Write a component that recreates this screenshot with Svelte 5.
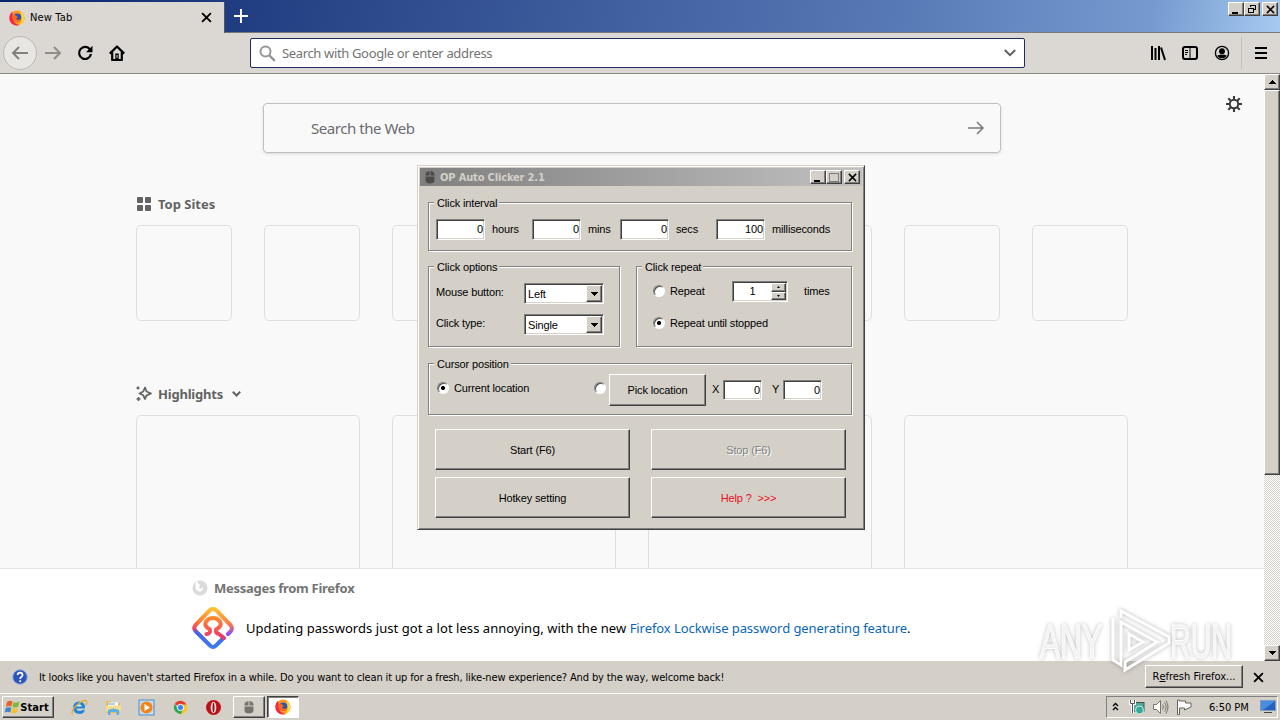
<script>
    const sites = Array(8);
    const highlights = Array(4);

    const intervals = [
        { label: "hours", value: 0 },
        { label: "mins", value: 0 },
        { label: "secs", value: 0 },
        { label: "milliseconds", value: 100 },
    ];

    const options = [
        { label: "Mouse button:", value: "Left" },
        { label: "Click type:", value: "Single" },
    ];
</script>

{#snippet firefox()}
    <svg width="16" height="16" viewBox="0 0 16 16">
        <circle cx="8" cy="8" r="7.6" fill="#ff9a1f" />
        <path d="M3.2 1.8C0 4-.4 9.200 1.600 12.200c2.300 3.200 6.600 4 9.800 2.600C7 15 4 12 4.200 8z" fill="#f5254e" />
        <path d="M11 1.200c4 2 5.600 6.800 3.400 10.600-1.200 2-3 3.200-5 3.600 3.500-3 4.600-6 1.600-14.200z" fill="#ffd83a" />
        <circle cx="8.200" cy="7.400" r="4" fill="#2456b8" />
        <path d="M3.200 4.500c1.600-.4 3 .2 4.200 1.300L9 7.500l-2 .8c1 2 3.500 2 5 .4-.6 3.600-5.600 4.500-7.800 1.600-1-1.600-1.200-3.600-1-5.800z" fill="#ff6a1c" />
    </svg>
{/snippet}

{#snippet mouse(color)}
    <svg width="12" height="16" viewBox="0 0 12 16" fill={color}>
        <path d="M5.500 2v4.500H1.500V5.500q0-3 4-3.500zM6.500 2v4.500h4V5.500q0-3-4-3.500zM1.500 7.500h9V11q0 3.500-4.500 3.500T1.500 11z" />
    </svg>
{/snippet}

{#snippet cross(size)}
    <svg width={size} height={size} viewBox="0 0 10 10">
        <path d="M1 1l8 8M9 1l-8 8" stroke="#000" stroke-width="1.700" fill="none" />
    </svg>
{/snippet}

{#snippet arrow(dir)}
    <svg width="7" height="4" viewBox="0 0 7 4" shape-rendering="crispEdges">
        <path d={dir === "up" ? "M0 4h7L3.500 0z" : "M0 0h7L3.500 4z"} />
    </svg>
{/snippet}

<div class="screen">
    <!-- tabs -->
    <header class="tabstrip">
        <div class="tab">
            {@render firefox()}
            <span class="tab-title">New Tab</span>
            {@render cross(11)}
        </div>
        <svg class="plus" width="14" height="14" viewBox="0 0 14 14">
            <path d="M7 0v14M0 7h14" stroke="#fff" stroke-width="2" />
        </svg>
        <div class="window-buttons">
            <span class="raised winbtn">
                <svg width="10" height="10"><path d="M1 8h6v2H1z" /></svg>
            </span>
            <span class="raised winbtn">
                <svg width="10" height="10" viewBox="0 0 10 10" fill="none" stroke="#000" shape-rendering="crispEdges">
                    <path d="M3.500 3V1.500h5v4H7M3 1h6M1.500 4.500h5v4h-5zM1 4h6" />
                </svg>
            </span>
            <span class="raised winbtn last">{@render cross(9)}</span>
        </div>
    </header>

    <!-- navigation bar -->
    <div class="toolbar">
        <span class="back">
            <svg width="18" height="16" viewBox="0 0 18 16" fill="none" stroke="#82807d" stroke-width="2">
                <path d="M17 8H2M8 2L2 8l6 6" />
            </svg>
        </span>
        <svg class="forward" width="18" height="16" viewBox="0 0 18 16" fill="none" stroke="#908d89" stroke-width="2">
            <path d="M1 8h15M10 2l6 6-6 6" />
        </svg>
        <svg class="reload" width="16" height="16" viewBox="0 0 16 16">
            <path d="M13 4.500A6 6 0 1 0 14 9" fill="none" stroke="#000" stroke-width="2.200" />
            <path d="M15.500 .8v6.400H9z" />
        </svg>
        <svg class="home" width="16" height="16" viewBox="0 0 16 16">
            <path d="M.8 8.600L8 1.500l7.200 7.100M3.200 7.500V15h9.600V7.500" fill="none" stroke="#000" stroke-width="2.200" stroke-linejoin="round" />
            <path d="M6.300 8.500h3.400V15H6.300z" />
            <path d="M7.500 10h1v3h-1z" fill="#dbd8d3" />
        </svg>
        <div class="urlbar">
            <svg width="17" height="17" viewBox="0 0 17 17" fill="none" stroke="#96969a" stroke-width="2">
                <circle cx="6.500" cy="6.500" r="5" />
                <path d="M10.300 10.300l5.500 5.500" stroke-width="2.500" />
            </svg>
            <span class="urltext">Search with Google or enter address</span>
            <svg width="12" height="8" viewBox="0 0 12 8" fill="none" stroke="#606060" stroke-width="2">
                <path d="M.8 1L6 6.200 11.200 1" />
            </svg>
        </div>
        <div class="tools">
            <svg width="16" height="16" viewBox="0 0 16 16" stroke="#000" stroke-width="2" fill="none">
                <path d="M2 1v14M5.500 3v12M9 1v14M11 2.500L15 15" />
            </svg>
            <svg width="16" height="16" viewBox="0 0 16 16" stroke="#000" fill="none">
                <rect x="1" y="2" width="14" height="12" rx="2" stroke-width="2" />
                <path d="M8 2v12M3 5.500h3M3 7.500h3M3 9.500h2" />
            </svg>
            <svg width="16" height="16" viewBox="0 0 16 16">
                <circle cx="8" cy="8" r="6.600" fill="none" stroke="#000" stroke-width="1.300" />
                <circle cx="8" cy="6.200" r="2.900" />
                <path d="M3.300 10.400Q8 8.800 12.700 10.400 11.500 13.200 8 13.200T3.300 10.400z" />
            </svg>
            <i class="separator"></i>
            <svg width="12" height="14" viewBox="0 0 12 14">
                <path d="M0 2h12M0 7h12M0 12h12" stroke="#000" stroke-width="2" />
            </svg>
        </div>
    </div>

    <!-- page -->
    <div class="content">
        <div class="page">
            <main>
                <div class="search">
                    <span>Search the Web</span>
                    <svg width="16" height="14" viewBox="0 0 16 14" fill="none" stroke="#77777b" stroke-width="1.500">
                        <path d="M0 7h15M9 1l6 6-6 6" />
                    </svg>
                </div>
                <h2>
                    <svg width="16" height="16" viewBox="0 0 16 16" fill="#636363">
                        <rect x="1" y="1" width="6" height="6" rx="1" /><rect x="9" y="1" width="6" height="6" rx="1" />
                        <rect x="1" y="9" width="6" height="6" rx="1" /><rect x="9" y="9" width="6" height="6" rx="1" />
                    </svg>
                    <span>Top Sites</span>
                </h2>
                <div class="sites">
                    {#each sites as _}
                        <div class="site"></div>
                    {/each}
                </div>
                <h2 class="second">
                    <svg width="16" height="16" viewBox="0 0 16 16" fill="none" stroke="#636363">
                        <path d="M9 1.500l1.600 4L15 7.500l-4.400 1.800L9 13 7.300 9.300 3.500 7.500l3.800-2z" stroke-width="1.800" stroke-linejoin="round" />
                        <path d="M2 .5v3M.5 2h3M2.500 11v4M.5 13h4" stroke-width="1.600" />
                    </svg>
                    <span class="highlights-title">Highlights</span>
                    <svg class="chevron" width="9" height="6" viewBox="0 0 9 6" fill="none" stroke="#636363" stroke-width="2">
                        <path d="M.8 .8l3.700 3.700L8.200 .8" />
                    </svg>
                </h2>
                <div class="cards">
                    {#each highlights as _}
                        <div class="card"></div>
                    {/each}
                </div>
                <svg class="gear" width="16" height="16" viewBox="0 0 16 16" fill="none" stroke="#3c3c40">
                    <circle cx="8" cy="8" r="4.200" stroke-width="2" />
                    <path d="M8 0v4M8 12v4M0 8h4M12 8h4M2.300 2.300l2.900 2.900M10.800 10.800l2.900 2.900M2.300 13.700l2.900-2.900M10.800 5.200l2.900-2.900" stroke-width="2.100" />
                </svg>
            </main>
            <div class="messages">
                <div class="messages-title">
                    <svg width="16" height="16" viewBox="0 0 16 16">
                        <circle cx="8" cy="8" r="7.500" fill="#dadada" />
                        <path d="M4 .5l4 5-1 2q2 2.500 4-.5Q11 12 7 11.500 3.500 10.500 3.500 6z" fill="#fff" />
                    </svg>
                    <span>Messages from Firefox</span>
                </div>
                <div class="messages-body">
                    <svg width="42" height="42" viewBox="0 0 42 42" fill="none" stroke-width="4" stroke-linecap="round" stroke-linejoin="round">
                        <defs>
                            <linearGradient id="lock" x1="0" y1="0" x2="0" y2="1">
                                <stop offset="0" stop-color="#ffbd30" />
                                <stop offset=".32" stop-color="#ff7d35" />
                                <stop offset=".52" stop-color="#f23e68" />
                                <stop offset=".6" stop-color="#4a60e8" />
                                <stop offset="1" stop-color="#3b7bea" />
                            </linearGradient>
                            <linearGradient id="edge" x1="0" y1="0" x2="0" y2="1">
                                <stop offset="0" stop-color="#ffc030" />
                                <stop offset=".6" stop-color="#ff7a48" />
                                <stop offset="1" stop-color="#8a50f0" />
                            </linearGradient>
                            <linearGradient id="head" x1="0" y1="0" x2="0" y2="1">
                                <stop offset="0" stop-color="#ff8a2b" />
                                <stop offset="1" stop-color="#ee3370" />
                            </linearGradient>
                        </defs>
                        <path d="M21 2q-2 0-3.500 1.500L3.500 18q-2.500 3 0 6L18 38.500q3 3 6 0l7-7" stroke="url(#lock)" />
                        <path d="M21 2q2 0 3.500 1.500L38.500 18q2.500 3 .5 6l-3 3" stroke="url(#edge)" />
                        <path d="M14.500 27q4 0 3.500-4.500Q11.500 19 14 14.500q2.500-3.500 7-3.500t7 3.500Q30.500 19 24 22.500q-.5 4 3 4.500l5 4" stroke="url(#head)" />
                    </svg>
                    <p>Updating passwords just got a lot less annoying, with the new <a href="#lockwise">Firefox Lockwise password generating feature</a>.</p>
                </div>
            </div>
        </div>
        <div class="scrollbar">
            <span class="raised scrollbtn">{@render arrow("up")}</span>
            <span class="raised thumb"></span>
            <span class="raised scrollbtn bottom">{@render arrow("down")}</span>
        </div>
    </div>

    <div class="notification">
        <svg width="16" height="16" viewBox="0 0 16 16">
            <circle cx="8" cy="8" r="7.200" fill="#2c55bd" stroke="#8aa5dc" />
            <path d="M5.500 6q.3-2.400 2.600-2.400T10.600 6q0 1.200-1.400 2Q8.200 8.500 8.200 10M8.200 11.300v1.700" fill="none" stroke="#fff" stroke-width="1.700" />
        </svg>
        <span class="notification-text">It looks like you haven't started Firefox in a while. Do you want to clean it up for a fresh, like-new experience? And by the way, welcome back!</span>
        <button class="raised refresh">R<u>e</u>fresh Firefox...</button>
        {@render cross(11)}
    </div>

    <footer class="taskbar">
        <button class="raised start">
            <svg width="16" height="16" viewBox="0 0 16 16">
                <path d="M2 3q3-2 5.500-.5L6.500 7.500Q4 6.500 1 8z" fill="#e8602c" />
                <path d="M8.500 3q3 1.500 6-.5l-1.200 5q-3 1.800-5.800 .5z" fill="#7cb83c" />
                <path d="M.8 9q3-1.500 5.500-.3L5.200 13.500Q2.500 12-.2 13.500z" fill="#3c84d0" />
                <path d="M7.200 9q3 1.500 6-.2L12 13.500q-3 1.500-6 .2z" fill="#f4c22c" />
            </svg>
            <b>Start</b>
        </button>
        <div class="launch">
            <svg width="17" height="17" viewBox="0 0 17 17" fill="none">
                <path d="M14 9.500H5.500q.3 2.500 3.200 2.500 1.600 0 2.500-1h2.600Q13 15 8.700 15 2 14.500 2 8.800T8.500 2.500Q14.500 3 14 9.500z" fill="#2784dc" />
                <path d="M5.500 7.500h5.300Q10.500 5.300 8 5.300T5.500 7.500z" fill="#d4ecfb" />
                <path d="M1.500 15.500Q-.5 12 6 6T15.500 2Q16.500 3 15 6" stroke="#e3b02d" stroke-width="1.300" />
            </svg>
            <svg width="17" height="17" viewBox="0 0 17 17">
                <path d="M1 2h5l1 2h8v10H1z" fill="#e5bb55" />
                <path d="M3 3.500h10v5H3z" fill="#fff" /><path d="M3 4.500h7v1H3z" fill="#54a9dd" />
                <path d="M1 6.500h15v6H1z" fill="#f7dd90" /><path d="M3 11q5.500-3 11 0v5h-2.500v-3h-6v3H3z" fill="#5cb0e4" />
            </svg>
            <svg width="17" height="17" viewBox="0 0 17 17">
                <rect x="1" y="1" width="15" height="15" fill="#c3dcf2" stroke="#4f8dc9" />
                <circle cx="8.500" cy="8.500" r="6" fill="#f28418" /><path d="M6.500 5l5.500 3.500-5.500 3.500z" fill="#fff" />
            </svg>
            <svg width="17" height="17" viewBox="0 0 17 17">
                <path d="M8.500 8.500L2.700 5Q5 1.800 8.500 1.800T14.500 5.500z" fill="#e33b2e" />
                <path d="M8.500 8.500h6.800Q15 14.500 8.500 15.200L12 8z" fill="#fbc916" />
                <path d="M14.500 5.500Q17 12 8.500 15.200L11 9V5.500z" fill="#fbc916" />
                <path d="M2.700 5Q-.5 12 8.500 15.200L11 11 6 10z" fill="#2da24f" />
                <circle cx="8.500" cy="8.500" r="3.200" fill="#4285e8" stroke="#fff" />
            </svg>
            <svg width="17" height="17" viewBox="0 0 17 17">
                <circle cx="8.500" cy="8.500" r="7.500" fill="#bd1118" />
                <ellipse cx="8.500" cy="8.500" rx="2.800" ry="5.800" fill="#f2e9e8" />
                <ellipse cx="8.500" cy="8.500" rx="1" ry="4.800" fill="#9b0a10" />
            </svg>
        </div>
        <span class="raised task">{@render mouse("#77736f")}</span>
        <span class="task active">{@render firefox()}</span>
        <div class="tray">
            <svg width="8" height="10" viewBox="0 0 8 10" fill="none" stroke="#000" stroke-width="1.300">
                <path d="M1 4l2.500-2.500L6 4M1 8l2.500-2.500L6 8" />
            </svg>
            <svg class="network" width="16" height="16" viewBox="0 0 16 16">
                <rect x="4" y="3.500" width="11" height="8.500" fill="#4fa99a" stroke="#44504e" />
                <path d="M1.500 1v3.500h4V1M3.500 4.500V14" fill="none" stroke="#fff" stroke-width="3" />
                <path d="M1.500 1v3.500h4V1M3.500 4.500V14" fill="none" stroke="#555" />
                <circle cx="10.500" cy="11" r="4" fill="#31a998" stroke="#cfeee9" />
            </svg>
            <svg class="sound" width="17" height="16" viewBox="0 0 17 16" fill="none" stroke="#77736f">
                <path d="M1.500 5.500h3l4-4v13l-4-4h-3z" fill="#fff" />
                <path d="M10.500 5.500q2 2.500 0 5M12.500 3.500q3.200 4.500 0 9M14 1.500q4 6.500 0 13" />
            </svg>
            <svg class="flag" width="16" height="16" viewBox="0 0 16 16" stroke="#66625f">
                <path d="M1.500 1v14.500h2V9h5v2l6.500-3V4H9.500V2h-6V1z" fill="#fff" />
            </svg>
            <span class="clock">6:50 PM</span>
            <svg class="desktop" width="16" height="14" viewBox="0 0 16 14">
                <rect x=".5" y=".5" width="15" height="10" fill="#2463bd" stroke="#7e9ac4" />
                <path d="M1 1h14L3 10H1z" fill="#4a8de0" /><path d="M4 12.500h8" stroke="#444" />
            </svg>
        </div>
    </footer>

    <!-- watermark laid over the page -->
    <svg class="watermark" width="200" height="66" viewBox="0 0 200 66">
        <text x="5" y="50" textLength="62" lengthAdjust="spacingAndGlyphs">ANY</text>
        <path d="M78 10v42l8 5V14l36 20-32 20v8l44-27v-6L86 3v7" />
        <path d="M94 26v16l14-8z" />
        <text x="135" y="50" textLength="62" lengthAdjust="spacingAndGlyphs">RUN</text>
    </svg>

    <!-- auto clicker window -->
    <div class="dialog">
        <div class="titlebar">
            {@render mouse("#4d4b49")}
            <b>OP Auto Clicker 2.1</b>
            <span class="raised winbtn"><svg width="10" height="10"><path d="M1 8h6v2H1z" /></svg></span>
            <span class="raised winbtn">
                <svg width="10" height="10" fill="none" stroke="#807d78" shape-rendering="crispEdges"><path d="M.5 1.500h9v8h-9zM0 1h10" /></svg>
            </span>
            <span class="raised winbtn last">{@render cross(9)}</span>
        </div>
        <div class="client">
            <div class="group interval">
                <span class="legend">Click interval</span>
                <div class="interval-row">
                    {#each intervals as item}
                        <label><span class="field">{item.value}</span><span class="unit">{item.label}</span></label>
                    {/each}
                </div>
            </div>
            <div class="group-row">
                <div class="group options">
                    <span class="legend">Click options</span>
                    {#each options as option}
                        <div class="option">
                            <span>{option.label}</span>
                            <div class="select">
                                <span>{option.value}</span>
                                <i class="raised">{@render arrow("down")}</i>
                            </div>
                        </div>
                    {/each}
                </div>
                <div class="group repeat">
                    <span class="legend">Click repeat</span>
                    <div class="repeat-row">
                        <i class="radio"></i>
                        <span class="repeat-label">Repeat</span>
                        <div class="spinner">
                            <span>1</span>
                            <div class="spin-buttons">
                                <i class="raised"><svg width="3" height="2"><path d="M0 2h3L1.500 0z" /></svg></i>
                                <i class="raised"><svg width="3" height="2"><path d="M0 0h3L1.500 2z" /></svg></i>
                            </div>
                        </div>
                        <span>times</span>
                    </div>
                    <div class="repeat-row until">
                        <i class="radio checked"></i>
                        <span>Repeat until stopped</span>
                    </div>
                </div>
            </div>
            <div class="group cursor">
                <span class="legend">Cursor position</span>
                <div class="cursor-row">
                    <i class="radio checked"></i>
                    <span class="current">Current location</span>
                    <i class="radio"></i>
                    <button class="raised pick">Pick location</button>
                    <span class="axis">X</span>
                    <span class="field small">0</span>
                    <span class="axis y">Y</span>
                    <span class="field small">0</span>
                </div>
            </div>
            <div class="actions">
                <button class="raised">Start (F6)</button>
                <button class="raised disabled">Stop (F6)</button>
                <button class="raised">Hotkey setting</button>
                <button class="raised help">Help ? &nbsp;&gt;&gt;&gt;</button>
            </div>
        </div>
    </div>
</div>

<style>
    :global(body) {
        margin: 0;
        overflow: hidden;
    }

    .screen {
        position: relative;
        display: flex;
        flex-direction: column;
        width: 1280px;
        height: 720px;
        overflow: hidden;
        background: #d4d0c8;
        color: #000;
        font: 11px "DejaVu Sans Condensed", "DejaVu Sans", sans-serif;
        white-space: nowrap;
    }

    .screen * {
        box-sizing: border-box;
    }

    svg {
        display: block;
        flex-shrink: 0;
    }

    button {
        color: inherit;
        font: inherit;
        letter-spacing: inherit;
        padding: 0;
    }

    .raised {
        display: flex;
        align-items: center;
        justify-content: center;
        background: #d4d0c8;
        border: 1px solid;
        border-color: #fff #404040 #404040 #fff;
        box-shadow: inset -1px -1px 0 #808080;
    }

    /* Tab strip */
    .tabstrip {
        display: flex;
        height: 33px;
        flex-shrink: 0;
        background: linear-gradient(100deg, #0a246a 0%, #223f83 20%, #5779b5 70%, #759bd0 90%, #a6caf0 100%);
        border-bottom: 1px solid #77797e;
    }

    .tab {
        display: flex;
        align-items: center;
        width: 225px;
        height: 31px;
        margin-top: 2px;
        padding: 0 12px 0 9px;
        background: #dbd8d3;
        border-right: 1px solid #4a5773;
    }

    .tab-title {
        flex: 1;
        margin-left: 5px;
        letter-spacing: .15px;
    }

    .plus {
        margin: 9px 0 0 9px;
    }

    .window-buttons {
        display: flex;
        margin: 2px 2px 0 auto;
    }

    .winbtn {
        width: 16px;
        height: 14px;
    }

    .winbtn.last {
        margin-left: 2px;
    }

    /* Toolbar */
    .toolbar {
        display: flex;
        align-items: center;
        height: 41px;
        flex-shrink: 0;
        background: #dbd8d3;
        border-bottom: 1px solid #8a8884;
    }

    .back {
        display: flex;
        align-items: center;
        justify-content: center;
        width: 34px;
        height: 34px;
        margin-left: 3px;
        border: 1px solid #bcb9b5;
        border-radius: 50%;
        background: #e8e6e3;
    }

    .forward {
        margin-left: 7px;
    }

    .reload {
        margin-left: 15px;
    }

    .home {
        margin-left: 16px;
    }

    .urlbar {
        display: flex;
        align-items: center;
        width: 775px;
        height: 30px;
        margin-left: 125px;
        padding: 0 8px;
        background: #fff;
        border: 1px solid #1d2c5c;
        border-radius: 2px;
    }

    .urltext {
        flex: 1;
        margin-left: 6px;
        color: #737373;
        font: 13px "Noto Sans", sans-serif;
        letter-spacing: -.35px;
    }

    .tools {
        display: flex;
        align-items: center;
        gap: 16px;
        margin-left: 125px;
    }

    .separator {
        width: 1px;
        height: 32px;
        margin: 0 -3px 0 -5px;
        background: #c0bdb9;
    }

    /* New tab page */
    .content {
        display: flex;
        flex: 1;
        min-height: 0;
    }

    .page {
        display: flex;
        flex: 1;
        flex-direction: column;
        font-family: "Noto Sans", "Open Sans", sans-serif;
    }

    main {
        position: relative;
        flex: 1;
        min-height: 0;
        padding: 29px 136px 0;
        overflow: hidden;
        background: #f9f9f9;
    }

    .search {
        display: flex;
        align-items: center;
        justify-content: space-between;
        width: 738px;
        height: 50px;
        margin-left: 127px;
        padding: 0 16px 0 47px;
        border: 1px solid #bfbfbf;
        border-radius: 4px;
        box-shadow: 0 1px 3px #0002;
        color: #6b6b70;
        font-size: 15px;
        letter-spacing: -.45px;
    }

    h2 {
        display: flex;
        align-items: center;
        height: 22px;
        margin: 40px 0 10px;
        color: #636363;
        font-size: 13px;
        font-weight: 700;
    }

    h2.second {
        margin-top: 62px;
    }

    h2 span {
        margin-left: 6px;
    }

    .highlights-title {
        letter-spacing: -.2px;
    }

    .chevron {
        margin-left: 9px;
    }

    .sites,
    .cards {
        display: flex;
        gap: 32px;
    }

    .site,
    .card {
        width: 96px;
        height: 96px;
        flex-shrink: 0;
        border: 1px solid #dfdfdf;
        border-radius: 5px;
    }

    .card {
        width: 224px;
        height: 220px;
    }

    .gear {
        position: absolute;
        top: 22px;
        right: 22px;
    }

    .messages {
        height: 93px;
        padding: 10px 192px 0;
        background: #fff;
        border-top: 1px solid #e4e4e4;
    }

    .messages-title {
        display: flex;
        align-items: center;
        gap: 6px;
        height: 18px;
        color: #737373;
        font-size: 13px;
        font-weight: 700;
        letter-spacing: -.28px;
    }

    .messages-body {
        display: flex;
        align-items: center;
        gap: 12px;
        margin-top: 10px;
        font-size: 13px;
    }

    .messages-body p {
        margin: 0;
        letter-spacing: .05px;
    }

    .messages-body a {
        color: #0a66b8;
        letter-spacing: -.07px;
        text-decoration: none;
    }

    .scrollbar {
        display: flex;
        flex-direction: column;
        width: 16px;
        background: repeating-conic-gradient(#fff 0 25%, #d4d0c8 0 50%) 0 0 / 2px 2px;
    }

    .scrollbtn {
        height: 16px;
    }

    .scrollbtn.bottom {
        margin-top: auto;
    }

    .thumb {
        height: 385px;
    }

    /* Notification bar */
    .notification {
        display: flex;
        align-items: center;
        height: 32px;
        flex-shrink: 0;
        padding: 0 16px 0 12px;
    }

    .notification-text {
        flex: 1;
        margin-left: 11px;
        letter-spacing: -.137px;
    }

    .refresh {
        width: 98px;
        height: 23px;
        margin: 0 10px 2px 0;
    }

    /* Taskbar */
    .taskbar {
        display: flex;
        align-items: center;
        height: 27px;
        flex-shrink: 0;
        padding: 0 2px;
        border-top: 1px solid #fff;
    }

    .start {
        width: 52px;
        height: 22px;
        letter-spacing: .1px;
    }

    .start b {
        margin-left: -1px;
        margin-right: 2px;
    }

    .launch {
        display: flex;
        gap: 16.5px;
        margin-left: 17px;
    }

    .task {
        display: flex;
        align-items: center;
        justify-content: center;
        width: 32px;
        height: 22px;
        margin-left: 11px;
    }

    .task.active {
        width: 32px;
        margin-left: 2px;
        background: #fff;
        border: 1px solid;
        border-color: #404040 #fff #fff #404040;
        box-shadow: inset 1px 1px 0 #808080;
    }

    .tray {
        display: flex;
        align-items: center;
        width: 172px;
        height: 22px;
        margin-left: auto;
        padding-left: 5px;
        border: 1px solid;
        border-color: #808080 #fff #fff #808080;
    }

    .network {
        margin-left: 9px;
    }

    .sound,
    .flag {
        margin-left: 7px;
    }

    .clock {
        width: 41px;
        margin-left: 17px;
    }

    .desktop {
        margin-left: 10px;
    }

    .watermark {
        position: absolute;
        left: 1035px;
        top: 608px;
        overflow: visible;
        fill: #ffffffb0;
        stroke: #fff;
        filter: drop-shadow(0 0 2px #00000050);
        font: 49px "Liberation Sans Narrow", "Liberation Sans", sans-serif;
    }

    .watermark path {
        fill: none;
        stroke-width: 3;
    }

    /* Auto clicker */
    .dialog {
        position: absolute;
        left: 417px;
        top: 165px;
        width: 448px;
        height: 365px;
        padding: 1px 1px 0 1px;
        background: #d4d0c8;
        border: 1px solid;
        border-color: #d4d0c8 #404040 #404040 #d4d0c8;
        box-shadow: inset 1px 1px 0 #fff, inset -1px -1px 0 #808080;
        font: 11px "Liberation Sans", Arial, sans-serif;
        letter-spacing: -.15px;
    }

    .titlebar {
        display: flex;
        align-items: center;
        height: 18px;
        margin: 1px 1px 0;
        padding: 0 2px 0 4px;
        background: linear-gradient(90deg, #808080, #c0c0c0);
        color: #d4d0c8;
        font-family: "DejaVu Sans Condensed", sans-serif;
    }

    .titlebar b {
        flex: 1;
        margin-left: 4px;
    }

    .client {
        padding: 16px 11px 0 9px;
    }

    .group {
        border: 1px solid #808080;
        box-shadow: 1px 1px 0 #fff, inset 1px 1px 0 #fff;
    }

    .legend {
        display: block;
        width: fit-content;
        height: 13px;
        margin: -7px 0 0 5px;
        padding: 0 2px 0 3px;
        background: #d4d0c8;
        line-height: 15px;
    }

    .interval {
        height: 49px;
    }

    .interval-row {
        display: grid;
        grid-template-columns: 96px 88px 96px 1fr;
        margin: 10px 0 0 7px;
    }

    .interval-row label {
        display: flex;
        align-items: center;
        gap: 7px;
    }

    .unit {
        margin-top: -2px;
    }

    .field {
        width: 49px;
        height: 21px;
        padding-right: 1px;
        background: #fff;
        border: 1px solid;
        border-color: #808080 #fff #fff #808080;
        box-shadow: inset 1px 1px 0 #404040, inset -1px -1px 0 #d4d0c8;
        line-height: 19px;
        text-align: right;
    }

    .group-row {
        display: flex;
        justify-content: space-between;
        margin-top: 15px;
    }

    .options {
        width: 192px;
        height: 81px;
    }

    .option {
        display: flex;
        align-items: center;
        justify-content: space-between;
        margin: 10px 15px 0 7px;
        height: 21px;
    }

    .option > span {
        margin-top: -3px;
    }

    .select,
    .spinner {
        display: flex;
        width: 80px;
        height: 21px;
        padding: 1px;
        background: #fff;
        border: 1px solid;
        border-color: #808080 #fff #fff #808080;
        box-shadow: inset 1px 1px 0 #404040, inset -1px -1px 0 #d4d0c8;
        line-height: 19px;
    }

    .select span {
        flex: 1;
        margin-left: 2px;
    }

    .select i {
        width: 16px;
    }

    .repeat {
        width: 216px;
        height: 81px;
    }

    .repeat-row {
        display: flex;
        align-items: center;
        height: 21px;
        margin: 8px 0 0 16px;
    }

    .repeat-row > span,
    .repeat-row > .radio {
        margin-top: -2px;
    }

    .repeat-row.until {
        margin-top: 11px;
    }

    .radio {
        width: 12px;
        height: 12px;
        margin-right: 5px;
        flex-shrink: 0;
        border: 1px solid;
        border-color: #808080 #fff #fff #808080;
        border-radius: 50%;
        background: #fff;
        box-shadow: inset 1px 1px 0 #505050;
    }

    .radio.checked {
        background: radial-gradient(circle at 50% 50%, #000 0 1.8px, #fff 2.3px);
    }

    .repeat-label {
        width: 62px;
    }

    .spinner {
        width: 56px;
        margin-right: 16px;
        line-height: 17px;
    }

    .spinner > span {
        flex: 1;
        text-align: center;
    }

    .spin-buttons {
        display: flex;
        flex-direction: column;
        width: 15px;
    }

    .spin-buttons i {
        flex: 1;
    }

    .cursor {
        height: 52px;
        margin-top: 16px;
    }

    .cursor-row {
        display: flex;
        align-items: center;
        height: 32px;
        margin: 4px 0 0 8px;
    }

    .cursor-row .radio,
    .current {
        margin-top: -4px;
    }

    .current {
        width: 140px;
    }

    .pick {
        width: 97px;
        height: 32px;
        margin-left: -2px;
    }

    .axis {
        width: 11px;
        margin: -2px 0 0 6px;
    }

    .axis.y {
        margin-left: 10px;
    }

    .field.small {
        width: 39px;
        height: 20px;
    }

    .actions {
        display: grid;
        grid-template-columns: 195px 195px;
        grid-auto-rows: 41px;
        gap: 7px 21px;
        margin: 14px 0 0 7px;
    }

    .disabled {
        color: #808080;
        text-shadow: 1px 1px 0 #fff;
    }

    .help {
        color: #e8101c;
    }
</style>
